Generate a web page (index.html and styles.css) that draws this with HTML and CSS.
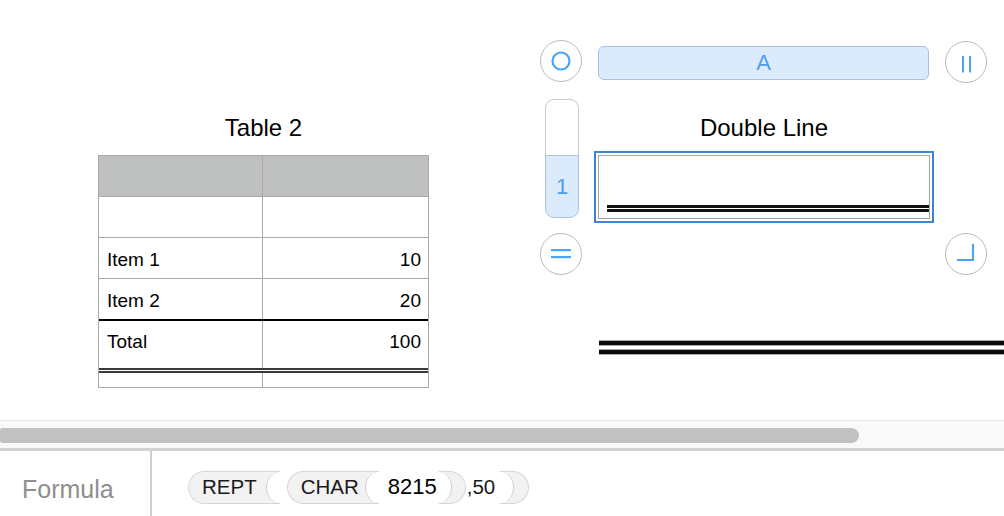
FILE: index.html
```html
<!DOCTYPE html>
<html>
<head>
<meta charset="utf-8">
<link rel="stylesheet" href="styles.css">
</head>
<body>
<div class="app">
  <div class="sheet">
    <div class="table-obj">
      <div class="obj-title">Table 2</div>
      <div class="grid">
        <div class="row head"><div class="c1"></div><div class="c2"></div></div>
        <div class="row"><div class="c1"></div><div class="c2"></div></div>
        <div class="row"><div class="c1">Item 1</div><div class="c2">10</div></div>
        <div class="row thick"><div class="c1">Item 2</div><div class="c2">20</div></div>
        <div class="row total"><div class="c1">Total</div><div class="c2">100</div></div>
        <div class="row last"><div class="c1"></div><div class="c2"></div></div>
      </div>
    </div>

    <div class="cell-obj">
      <div class="obj-title">Double Line</div>
      <div class="cell-outer">
        <div class="cell-inner"><div class="dl"></div></div>
      </div>
    </div>

    <div class="ref-bar">A</div>

    <div class="slider">
      <div class="slider-top"></div>
      <div class="slider-bot">1</div>
    </div>

    <div class="handle h-tl">
      <svg width="42" height="42" viewBox="0 0 42 42"><circle cx="21" cy="21" r="8.5" fill="none" stroke="#4ea4f4" stroke-width="2.2"/></svg>
    </div>
    <div class="handle h-tr">
      <svg width="42" height="42" viewBox="0 0 42 42"><rect x="17" y="15" width="2" height="16.5" fill="#4ea4f4"/><rect x="24" y="15" width="2" height="16.5" fill="#4ea4f4"/></svg>
    </div>
    <div class="handle h-bl">
      <svg width="42" height="42" viewBox="0 0 42 42"><rect x="11" y="16" width="20" height="2.2" fill="#4ea4f4"/><rect x="11" y="23" width="20" height="2.2" fill="#4ea4f4"/></svg>
    </div>
    <div class="handle h-br">
      <svg width="42" height="42" viewBox="0 0 42 42"><polyline points="12,27 28,27 28,11" fill="none" stroke="#4ea4f4" stroke-width="2.2"/></svg>
    </div>

    <div class="bigdl"><div class="bl"></div><div class="bl"></div></div>
  </div>

  <div class="hscroll"><div class="thumb"></div></div>

  <div class="formula-bar">
    <div class="fb-label">Formula</div>
    <div class="expr">
      <span class="tok open first">REPT<span class="arc-l"></span></span>
      <span class="tok open second">CHAR<span class="arc-l"></span></span>
      <span class="num">8215</span>
      <span class="tok close"><span class="arc-r"></span></span>
      <span class="plain">,50</span>
      <span class="tok close last-close"><span class="arc-r"></span></span>
    </div>
  </div>
</div>
</body>
</html>
```
FILE: styles.css
```css
* { box-sizing: border-box; }
html, body { margin: 0; padding: 0; }
body {
  width: 1004px;
  height: 516px;
  overflow: hidden;
  background: #fff;
  font-family: "Liberation Sans", Arial, sans-serif;
  color: #000;
}
.app { display: flex; flex-direction: column; height: 516px; }
.sheet { position: relative; height: 420px; flex: none; }

/* objects on the sheet canvas */
.obj-title {
  font-size: 24px;
  line-height: 25px;
  height: 25px;
  text-align: center;
}
.table-obj { position: absolute; left: 98px; top: 115px; width: 331px; }
.table-obj .obj-title { margin-bottom: 15px; }
.grid { border: 1px solid #a9a9a9; font-size: 19px; }
.row { display: flex; height: 41px; border-bottom: 1px solid #a9a9a9; align-items: stretch; }
.row .c1, .row .c2 { display: flex; align-items: center; padding: 4px 8px 0; }
.row .c1 { width: 164px; border-right: 1px solid #a9a9a9; }
.row .c2 { flex: 1; justify-content: flex-end; padding-right: 7px; }
.row.head { background: #bfc1c0; }
.row.thick { height: 42px; border-bottom: 2px solid #000; }
.row.total { height: 52px; border-bottom: 5px double #3a3a3a; }
.row.total .c1, .row.total .c2 { align-items: flex-start; padding-top: 10px; }
.row.last { height: 14px; border-bottom: none; }

.cell-obj { position: absolute; left: 594px; top: 115px; width: 340px; }
.cell-obj .obj-title { margin-bottom: 11px; }
.cell-outer { height: 72px; border: 2px solid #3b85d2; padding: 2px; }
.cell-inner {
  height: 100%;
  border: 1px solid #a3a3a3;
  padding-left: 8px;
  display: flex;
  flex-direction: column;
}
.dl {
  margin-top: auto;
  margin-bottom: 6px;
  height: 7px;
  border-top: 3px solid #111;
  border-bottom: 3px solid #111;
}

.ref-bar {
  position: absolute;
  left: 598px; top: 46px;
  width: 331px; height: 34px;
  border: 1px solid #a9c1de;
  border-radius: 6px;
  background: #dcebfc;
  color: #4c9ff0;
  font-size: 22px;
  display: flex; align-items: center; justify-content: center;
}

.slider {
  position: absolute;
  left: 545px; top: 99px;
  width: 34px; height: 119px;
  display: flex; flex-direction: column;
}
.slider-top {
  height: 56px;
  border: 1px solid #c9c9c9;
  border-bottom: none;
  border-radius: 9px 9px 0 0;
  background: #fff;
}
.slider-bot {
  flex: 1;
  border: 1px solid #a9c4e3;
  border-radius: 0 0 9px 9px;
  background: #dcebfc;
  color: #4c9ff0;
  font-size: 22px;
  display: flex; align-items: center; justify-content: center;
}

.handle {
  position: absolute;
  width: 42px; height: 42px;
  border-radius: 50%;
  border: 1px solid #bcbcbc;
  background: #fff;
}
.handle svg { position: absolute; left: -1px; top: -1px; }
.h-tl { left: 540px; top: 40px; }
.h-tr { left: 945px; top: 41px; }
.h-bl { left: 540px; top: 233px; }
.h-br { left: 945px; top: 233px; }

.bigdl { position: absolute; left: 599px; right: 0; top: 340px; }
.bigdl .bl {
  height: 6px;
  background: #0a0a0a;
  border-top: 1px solid #a8a8a8;
  border-bottom: 1px solid #a8a8a8;
}
.bigdl .bl + .bl { margin-top: 3px; }

/* horizontal scroller */
.hscroll {
  flex: none;
  height: 31px;
  border-top: 1px solid #e6e6e6;
  border-bottom: 3px solid #d2d2d2;
  background: #f9f9f9;
  padding-top: 7px;
}
.thumb {
  width: 859px; height: 15px;
  background: #c1c1c1;
  border-radius: 3px 8px 8px 3px;
}

/* formula bar */
.formula-bar { flex: 1; display: flex; align-items: stretch; }
.fb-label {
  width: 152px;
  border-right: 2px solid #cfcfcf;
  display: flex; align-items: center;
  padding: 11px 0 0 22px;
  color: #8e8e8e;
  font-size: 25px;
}
.expr {
  display: flex; align-items: center;
  padding: 7px 0 0 36px;
  font-size: 20.5px;
  color: #1a1a1a;
}
.tok {
  display: inline-flex; align-items: center;
  height: 33px;
  background: #f2f2f2;
  border: 1px solid #d6d6d6;
}
.tok.open { border-right: none; border-radius: 17px 0 0 17px; padding-left: 13px; }
.tok.second { margin-left: 7px; padding-left: 13px; }
.arc-l {
  align-self: stretch;
  width: 14px;
  margin-left: 9px;
  background: #fff;
  border-left: 1px solid #cdcdcd;
  border-radius: 14px 0 0 14px / 50% 0 0 50%;
}
.tok.second .arc-l { margin-left: 6px; }
.num { padding: 0 2px 0 9px; color: #000; font-size: 22px; }
.tok.close {
  border-left: none;
  border-radius: 0 17px 17px 0;
  width: 27px;
}
.arc-r {
  align-self: stretch;
  width: 13px;
  background: #fff;
  border-right: 1px solid #cdcdcd;
  border-radius: 0 13px 13px 0 / 0 50% 50% 0;
}
.plain { padding: 0 5px 0 1px; }
.tok.last-close { width: 29px; }
.tok.last-close .arc-r { width: 14px; }
```
